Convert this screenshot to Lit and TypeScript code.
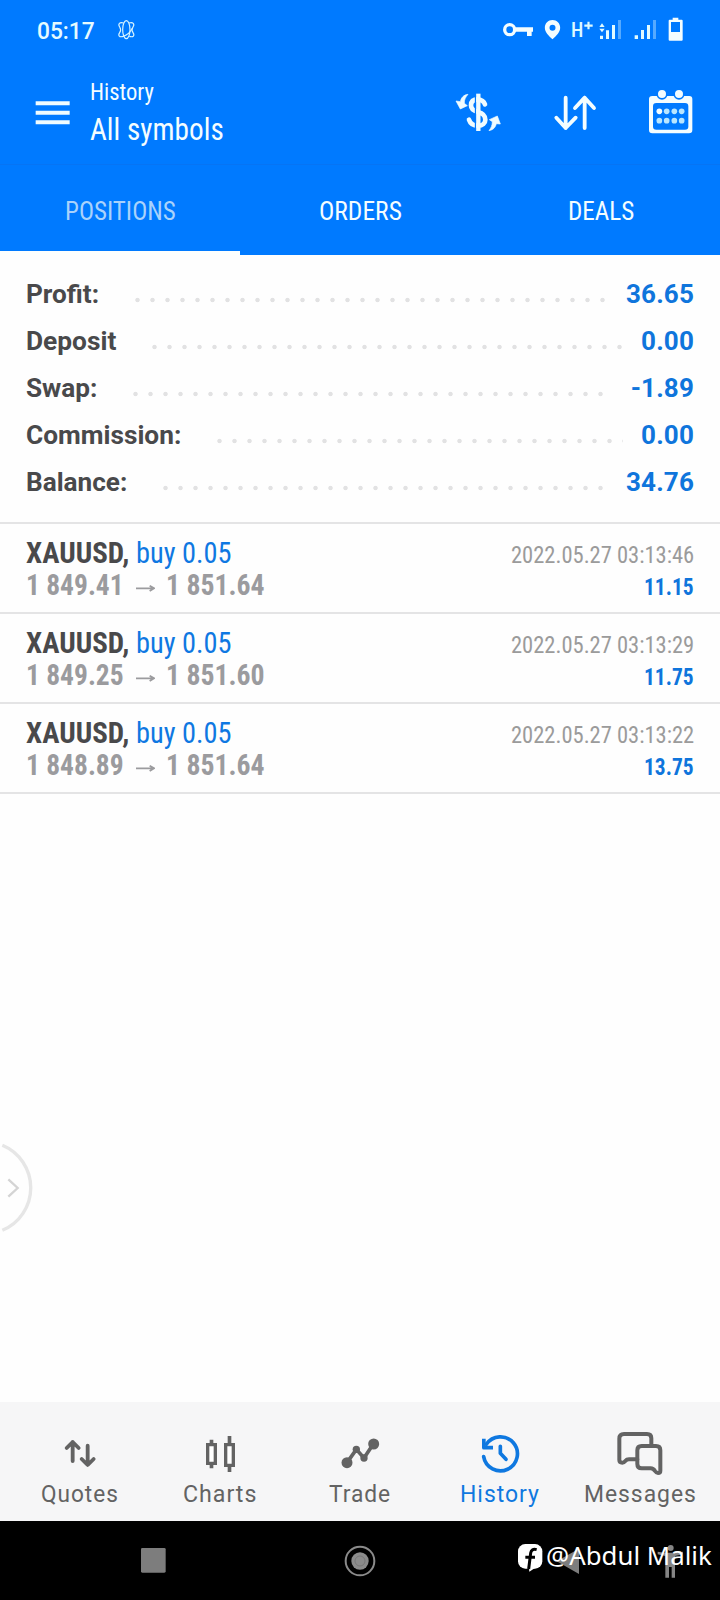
import { LitElement, html, css, svg } from "lit";
import { customElement, property, query } from "lit/decorators.js";

/** One line of text set condensed, squeezed to a given advance width. */
@customElement("fit-text")
class FitText extends LitElement {
  static styles = css`
    :host { display: block; white-space: pre; }
    .ink { display: inline-block; transform-origin: 0 50%; }
  `;
  @property({ type: Number }) w = 0;
  @property() text = "";
  @query(".ink") ink!: HTMLElement;
  updated() {
    this.style.width = `${this.w}px`;
    const natural = this.ink.offsetWidth;
    if (natural) this.ink.style.transform = `scaleX(${this.w / natural})`;
  }
  render() {
    return html`<span class="ink">${this.text}</span>`;
  }
}

const summary = [
  { label: "Profit:", value: "36.65", w: 73.5 },
  { label: "Deposit", value: "0.00", w: 90 },
  { label: "Swap:", value: "-1.89", w: 71.5 },
  { label: "Commission:", value: "0.00", w: 155.5 },
  { label: "Balance:", value: "34.76", w: 101.5 },
];

const deals = [
  { open: "1 849.41", close: "1 851.64", time: "2022.05.27 03:13:46", profit: "11.15" },
  { open: "1 849.25", close: "1 851.60", time: "2022.05.27 03:13:29", profit: "11.75" },
  { open: "1 848.89", close: "1 851.64", time: "2022.05.27 03:13:22", profit: "13.75" },
];

const icon = (box: string, w: number, h: number, body: unknown) =>
  html`<svg viewBox=${box} width=${w} height=${h} fill="none">${body}</svg>`;

const atom = icon("350 56 57 63", 19, 21, svg`
  <g stroke="#d8f4ff" stroke-width="3.500">
    <ellipse cx="378" cy="88" rx="11" ry="27"/>
    <path d="M370 68c-12-4-18 3-12 12 4 6 4 11 0 17-6 9-1 15 11 11 10-3 21-12 27-24"/>
    <path d="M386 68c12-4 18 3 12 12-4 6-4 11 0 17 6 9 1 15-11 11"/>
  </g>`);

const key = icon("426 60 96 60", 32, 20, svg`
  <circle cx="449" cy="89" r="15" stroke="#f4fdff" stroke-width="10"/>
  <path d="M466 82h53v13h-4v13h-14V95h-35z" fill="#f4fdff"/>`);

const pin = icon("552 57 51 63", 17, 21, svg`
  <path fill="#f4fdff" fill-rule="evenodd" d="M577.500 60c-13 0-23 10-23 23 0 14 12 24 23 35 11-11 23-21 23-35 0-13-10-23-23-23zm0 14a9 9 0 1 1 0 18 9 9 0 0 1 0-18z"/>`);

const signalData = icon("717 57 69 63", 23, 21, svg`
  <g fill="#e2fbff">
    <path d="M726 70l8 11h-16zM726 97l8-11h-16zM720 107h9v10h-9zM738 91h9v26h-9zM756 75h9v42h-9z"/>
    <path opacity=".38" d="M774 60h9v57h-9z"/>
  </g>`);

const signal = icon("822 57 69 63", 23, 21, svg`
  <g fill="#e2fbff">
    <path d="M824 106h10v11h-10zM843 90h9v27h-9zM861 75h9v42h-9z"/>
    <path opacity=".38" d="M879 60h9v57h-9z"/>
  </g>`);

const battery = icon("924 52 45 72", 15, 24, svg`
  <path fill="#f4fdff" fill-rule="evenodd" d="M938 54h17v6h10q3 0 3 3v57q0 3-3 3h-36q-3 0-3-3V63q0-3 3-3h9zM933 67v30h27V67z"/>`);

const plus = icon("669 64 27 27", 9, 9, svg`
  <path d="M682.500 66v23M670 78h25" stroke="#dcf9ff" stroke-width="6.500"/>`);

const menu = icon("105 300 108 75", 36, 25, svg`
  <path d="M107 309.500h102M107 338.500h102M107 366.500h102" stroke="#f0fcff" stroke-width="12"/>`);

const dollar = icon("280 270 150 135", 50, 45, svg`
  <g stroke="#f0fcff" stroke-width="14" stroke-linecap="round">
    <path d="M373 313C369 303 363 299 352 298c-14 0-21 7-21 18 0 12 8 17 21 20 15 4 22 11 22 23 0 11-8 18-22 18-15 0-23-6-27-18"/>
  </g>
  <path d="M344.500 280v115" stroke="#007aff" stroke-width="4"/>
  <path d="M353 281v112" stroke="#f0fcff" stroke-width="13"/>
  <g fill="#f0fcff" stroke="#f0fcff" stroke-width="2" stroke-linejoin="round">
    <path d="M322 283C308 285 302 293 299 305L286 303l13 24 21-10-9-7c-1-10 4-19 11-27z"/>
    <path d="M385 392c14-3 19-10 22-21l12 1-9-24-24 11 9 6c0 11-4 19-10 27z"/>
  </g>`);

const sort = icon("577 278 132 120", 44, 40, svg`
  <path d="M615 292v91M587 352l28 31 30-31M672 383v-91M643 323l29-31 28 31" stroke="#f4fdff" stroke-width="11.500" stroke-linecap="round" stroke-linejoin="round"/>`);

const calendar = icon("864 264 138 138", 46, 46, svg`
  <path fill="#f4fdff" fill-rule="evenodd" d="M877 288h111q9 0 9 9v93q0 10-10 10H877q-10 0-10-10v-93q0-9 10-9zM889 309q-10 0-10 10v61q0 9 10 9h86q10 0 10-9v-61q0-10-10-10z"/>
  <g fill="#f4fdff" stroke="#007aff" stroke-width="5"><circle cx="906" cy="282" r="14.500"/><circle cx="957" cy="282" r="14.500"/></g>
  <circle cx="898" cy="334" r="8.500" fill="#f4fdff"/>
  <g fill="#b9e6ff">
    <circle cx="920" cy="334" r="8.500"/><circle cx="943" cy="334" r="8.500"/><circle cx="965" cy="334" r="8.500"/>
    <circle cx="898" cy="362" r="8.500"/><circle cx="920" cy="362" r="8.500"/><circle cx="943" cy="362" r="8.500"/><circle cx="965" cy="362" r="8.500"/>
  </g>`);

const quotesIcon = icon("169 117 144 144", 48, 48, svg`
  <path d="M219 213v-57M201 174l18-18 18 18M264 167v57M246 207l18 18 18-18" stroke="#636363" stroke-width="11.500" stroke-linecap="round" stroke-linejoin="round"/>`);

const chartsIcon = icon("588 117 144 144", 48, 48, svg`
  <path fill="#fff" stroke="#636363" stroke-width="10" d="M623 164h23v56h-23zM677 164h23v62h-23z"/>
  <path stroke="#636363" stroke-width="11" d="M634.500 149v12M634.500 223v12M688.500 138v23M688.500 229v17"/>`);

const tradeIcon = icon("1008 117 144 144", 48, 48, svg`
  <path d="M1041 218l28-40 23 26 28-42" stroke="#636363" stroke-width="11"/>
  <g fill="#636363"><circle cx="1041" cy="218" r="16.500"/><circle cx="1069" cy="178" r="11"/><circle cx="1092" cy="204" r="11"/><circle cx="1121" cy="162" r="16.500"/></g>`);

const historyIcon = icon("348 117 144 144", 48, 48, svg`
  <g stroke="#0f78e0" stroke-width="11" stroke-linejoin="round">
    <path stroke-linecap="round" d="M371 200a51 51 0 1 0 8-37"/>
    <path d="M371.500 146v27H399"/>
    <path stroke-linecap="round" d="M421 169v21l17 18"/>
  </g>`);

const messagesIcon = icon("767 117 144 144", 48, 48, svg`
  <g stroke="#636363" stroke-width="12" stroke-linejoin="round" stroke-linecap="round">
    <path d="M873 163v-18q0-13-13-13h-69q-14 0-14 14v64q0 8 9 8 5 0 9-5 4-5 11-5h25"/>
    <path d="M844 168h43q13 0 13 13v61q0 7-7 7-5 0-9-6-5-8-13-8h-27q-13 0-13-13v-41q0-13 13-13z"/>
  </g>`);

const navItems = [
  { label: "Quotes", glyph: quotesIcon, w: 78 },
  { label: "Charts", glyph: chartsIcon, w: 74 },
  { label: "Trade", glyph: tradeIcon, w: 62 },
  { label: "History", glyph: historyIcon, w: 80, active: true },
  { label: "Messages", glyph: messagesIcon, w: 113 },
];

@customElement("app-root")
class AppRoot extends LitElement {
  static styles = css`
    :host {
      display: flex; flex-direction: column; position: relative;
      width: 720px; height: 1600px; overflow: hidden; background: #fefefe;
      font-family: "Roboto Condensed", Roboto, sans-serif; font-stretch: 75%;
    }
    svg { display: block; flex: none; }
    .top { background: #007aff; color: #f4fdff; height: 255px; flex: none; }
    .status { height: 60px; display: flex; align-items: flex-start; padding: 0 37px 0 37px; box-sizing: border-box; }
    .clock { font: 500 23.5px/28px Roboto, sans-serif; padding-top: 17px; color: #e6fbff; }
    .atom { padding: 19px 0 0 21.5px; }
    .tray { margin-left: auto; display: flex; align-items: flex-start; padding-top: 19px; }
    .key { padding: 1px 10px 0 0; }
    .net { display: flex; width: 22px; margin: 0 6px 0 10px; gap: 1px; }
    .net fit-text { font-size: 20px; line-height: 24px; margin-top: -1px; color: #dcf9ff; font-weight: 500; }
    .net svg { margin-top: 2px; }
    .sig { margin-right: 12px; }
    .sig2 { margin-right: 11px; }
    .batt { margin-top: -2px; }
    .bar { height: 105px; display: flex; align-items: flex-start; padding: 0 26px 0 35px; box-sizing: border-box; border-bottom: 1px solid #0674f4; }
    .bar .menu { padding-top: 40px; }
    .titles { display: flex; flex-direction: column; gap: 5px; padding: 18px 0 0 19px; }
    .small { font-size: 24px; line-height: 28px; }
    .big { font-size: 31px; line-height: 38px; }
    .tools { margin-left: auto; display: flex; align-items: flex-start; }
    .t1 { padding: 30px 48.5px 0 0; }
    .t2 { padding: 33px 51.5px 0 0; }
    .t3 { padding-top: 28px; }
    .tabs { display: grid; grid-template-columns: repeat(3, 1fr); height: 90px; }
    .tab { display: flex; justify-content: center; align-items: center; font-size: 25.5px; line-height: 30px; padding: 6px 0 0 1px; border-bottom: 4px solid transparent; box-sizing: border-box; }
    .tab.on { color: #a9d2fb; border-bottom-color: #fdfffe; }
    .summary { padding: 16px 26px; }
    .line { display: flex; height: 47px; font: 700 26px/47px Roboto, sans-serif; color: #49494b; }
    .dots { flex: 1; margin: 24.5px 18.5px 0 35.5px; height: 8px;
      background: radial-gradient(circle at 2.500px 4px, #e2e2e3 1.8px, transparent 2.6px) 0 0 / 15px 8px repeat-x; }
    .value { color: #0f75dc; letter-spacing: 0.15px; }
    .deal { height: 90px; box-sizing: border-box; border-top: 2px solid #e4e4e5; display: flex; justify-content: space-between; padding: 12.5px 26px 0; }
    .deals { border-bottom: 2px solid #e4e4e5; }
    .lft { font-size: 30px; line-height: 32.3px; }
    .name { display: flex; }
    .sym { font-weight: 700; color: #49494b; }
    .side { color: #0f78e2; margin-left: 7px; }
    .prices { display: flex; color: #9b9b9e; font-weight: 700; }
    .prices svg { margin: 15px 11px 0 12px; }
    .rgt { display: flex; flex-direction: column; align-items: flex-end; font-size: 24px; line-height: 32.3px; padding-top: 2px; color: #9b9b9b; }
    .gain { font-weight: 700; color: #0f75dc; }
    .space { flex: 1; display: flex; align-items: flex-start; }
    .handle { margin-top: 346px; }
    .nav { height: 119px; background: #f6f6f7; display: grid; grid-template-columns: repeat(5, 140px); justify-content: center; flex: none; }
    .item { display: flex; flex-direction: column; align-items: center; gap: 3px; padding-top: 27px; color: #636363; }
    .item.on { color: #0f78e0; }
    .item fit-text { font: 400 23.5px/28px Roboto, sans-serif; letter-spacing: 1px; }
    .sys { height: 79px; background: #000; flex: none; display: flex; align-items: center; padding-left: 141px; box-sizing: border-box; }
    .home { margin-left: 178px; }
    .back { margin-left: 180px; }
    .person { margin-left: 76px; }
    .mark { position: absolute; left: 517px; top: 1543px; display: flex; align-items: flex-start; gap: 3px; color: #fff; }
    .mark fit-text { font: 400 25.5px/30px "Noto Sans", "Open Sans", sans-serif; margin-top: -3px; }
  `;

  render() {
    return html`
      <header class="top">
        <div class="status">
          <fit-text class="clock" .w=${58} .text=${"05:17"}></fit-text>
          <div class="atom">${atom}</div>
          <div class="tray">
            <div class="key">${key}</div>
            ${pin}
            <div class="net"><fit-text .w=${12} .text=${"H"}></fit-text>${plus}</div>
            <div class="sig">${signalData}</div>
            <div class="sig2">${signal}</div>
            <div class="batt">${battery}</div>
          </div>
        </div>
        <div class="bar">
          <div class="menu">${menu}</div>
          <div class="titles">
            <fit-text class="small" .w=${64} .text=${"History"}></fit-text>
            <fit-text class="big" .w=${134} .text=${"All symbols"}></fit-text>
          </div>
          <div class="tools">
            <div class="t1">${dollar}</div>
            <div class="t2">${sort}</div>
            <div class="t3">${calendar}</div>
          </div>
        </div>
        <div class="tabs">
          <div class="tab on"><fit-text .w=${111} .text=${"POSITIONS"}></fit-text></div>
          <div class="tab"><fit-text .w=${83} .text=${"ORDERS"}></fit-text></div>
          <div class="tab"><fit-text .w=${66} .text=${"DEALS"}></fit-text></div>
        </div>
      </header>
      <section class="summary">
        ${summary.map((s) => html`<div class="line">
          <fit-text .w=${s.w} .text=${s.label}></fit-text>
          <div class="dots"></div>
          <span class="value">${s.value}</span>
        </div>`)}
      </section>
      <section class="deals">
        ${deals.map((d) => html`<div class="deal">
          <div class="lft">
            <div class="name">
              <fit-text class="sym" .w=${103} .text=${"XAUUSD,"}></fit-text>
              <fit-text class="side" .w=${95.5} .text=${"buy 0.05"}></fit-text>
            </div>
            <div class="prices">
              <fit-text .w=${98} .text=${d.open}></fit-text>
              ${icon("408 196 57 24", 19, 8, svg`<path d="M408 209h54M449 201l13 8-13 8" stroke="#9b9b9e" stroke-width="5.500"/>`)}
              <fit-text .w=${99} .text=${d.close}></fit-text>
            </div>
          </div>
          <div class="rgt">
            <fit-text .w=${183} .text=${d.time}></fit-text>
            <fit-text class="gain" .w=${50} .text=${d.profit}></fit-text>
          </div>
        </div>`)}
      </section>
      <div class="space">
        <div class="handle">${icon("0 60 105 285", 35, 95, svg`
          <path d="M7 76A138 138 0 0 1 7 331" stroke="#e6e6e6" stroke-width="10"/>
          <path d="M25 178l28 26-28 26" stroke="#d4d4d4" stroke-width="7"/>`)}</div>
      </div>
      <nav class="nav">
        ${navItems.map((n) => html`<div class="item ${n.active ? "on" : ""}">
          ${n.glyph}<fit-text .w=${n.w} .text=${n.label}></fit-text>
        </div>`)}
      </nav>
      <div class="sys">
        ${icon("424 474 75 75", 25, 25, svg`<rect x="424" y="474" width="74" height="74" rx="4" fill="#7d7d7d"/>`)}
        <div class="home">${icon("1032 462 96 96", 32, 32, svg`<circle cx="1080" cy="510" r="43" stroke="#8b8b8b" stroke-width="6"/><circle cx="1080" cy="510" r="26" fill="#8b8b8b"/><circle cx="1080" cy="510" r="15" stroke="#777" stroke-width="3"/>`)}</div>
        <div class="back">${icon("590 468 75 84", 25, 28, svg`<path d="M659 473v76l-67-38z" fill="#7d7d7d"/>`)}</div>
        <div class="person">${icon("893 460 81 102", 27, 34, svg`<circle cx="934" cy="472" r="9" fill="#858585"/><path fill="#858585" d="M895 483q39 7 76 0v8l-24 5v65h-10v-32h-8v32h-11v-65l-23-5z"/>`)}</div>
      </div>
      <div class="mark">
        ${icon("471 459 78 90", 26, 30, svg`<rect x="474" y="462" width="73" height="74" rx="22" fill="#fff"/><path d="M506 528l2 17 18-12z" fill="#fff"/><path d="M530 479q-16-4-18 10l-6 48M496 502h29" stroke="#000" stroke-width="9"/>`)}
        <fit-text .w=${166} .text=${"@Abdul Malik"}></fit-text>
      </div>
    `;
  }
}
